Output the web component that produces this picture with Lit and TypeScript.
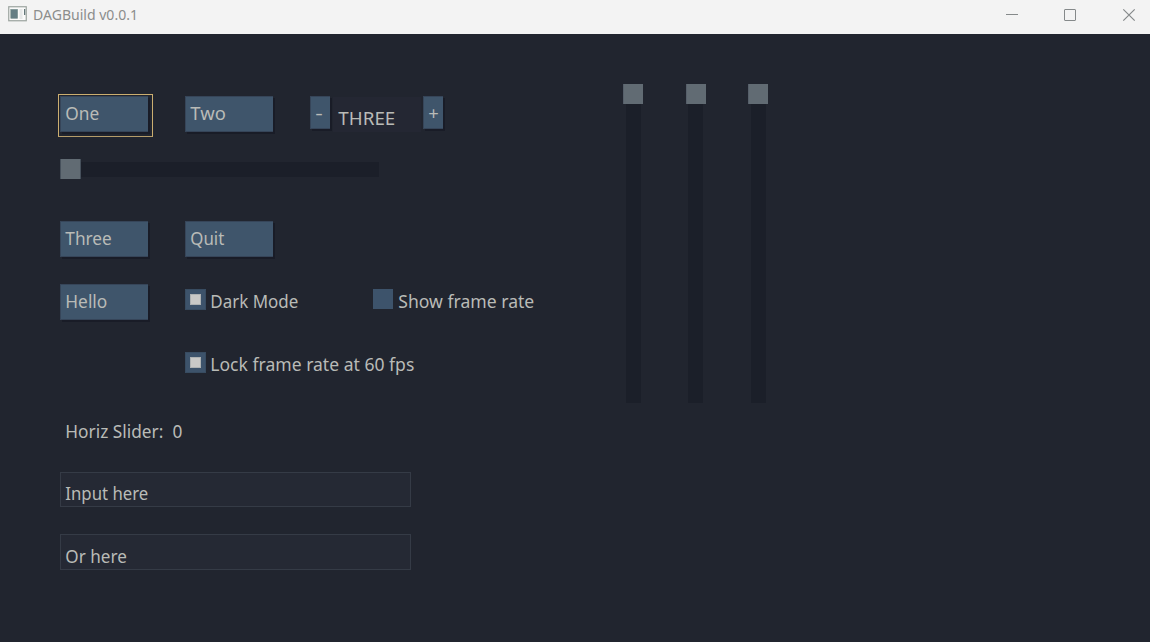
import { LitElement, html, css, svg } from "lit";
import { customElement, property } from "lit/decorators.js";
import { classMap } from "lit/directives/class-map.js";

/** Text set to a given advance width, the way the toolkit's font atlas lays it out. */
@customElement("ui-text")
class UiText extends LitElement {
  @property() value = "";
  @property({ type: Number }) width = 0;
  static styles = css`
    :host { display: block; height: 24px; }
    svg { display: block; overflow: visible; }
    text { font: 18.5px "Noto Sans", sans-serif; fill: #b9bbb7; white-space: pre; }
  `;
  render() {
    return html`<svg width=${this.width} height="24">
      ${svg`<text x="0.3" y="19.4" textLength=${this.width} lengthAdjust="spacingAndGlyphs">${this.value}</text>`}
    </svg>`;
  }
}

@customElement("ui-button")
class UiButton extends LitElement {
  @property() label = "";
  @property({ type: Number }) textWidth = 0;
  @property({ type: Boolean }) focused = false;
  static styles = css`
    :host { display: block; }
    .button {
      box-sizing: border-box; width: 88px; height: 36px; padding: 4px 0 0 4px;
      background: #3f556b; border: 1px solid #364559; border-right: 0;
      box-shadow: 2px 2px 0 #191c27;
    }
    .ring { width: 91px; height: 39px; padding: 1px; margin: -2px; border: 1px solid #cbae70; border-bottom-color: #b59c69; }
  `;
  render() {
    const face = html`<div class="button"><ui-text .value=${this.label} .width=${this.textWidth}></ui-text></div>`;
    return this.focused ? html`<div class="ring">${face}</div>` : face;
  }
}

@customElement("ui-check")
class UiCheck extends LitElement {
  @property() label = "";
  @property({ type: Number }) textWidth = 0;
  @property({ type: Boolean }) checked = false;
  static styles = css`
    :host { display: flex; gap: 5px; padding-top: 5px; }
    .box { box-sizing: border-box; width: 20px; height: 20px; padding: 5px; background: #3d536b; }
    .on { width: 21px; height: 21px; border: 1px solid #384c61; padding: 4px; margin-right: -1px; }
    .mark { width: 11px; height: 11px; background: #c9c9c7; box-shadow: inset 0 0 0 1px #aeb2b3; }
  `;
  render() {
    return html`<div class=${classMap({ box: true, on: this.checked })}>
        ${this.checked ? html`<div class="mark"></div>` : null}
      </div>
      <ui-text .value=${this.label} .width=${this.textWidth}></ui-text>`;
  }
}

@customElement("app-root")
class AppRoot extends LitElement {
  static styles = css`
    :host { display: flex; flex-direction: column; width: 1150px; height: 642px; background: #21252f; overflow: hidden; }
    .title { display: flex; align-items: center; height: 34px; background: #f3f3f3; flex: none; }
    .appicon { margin: -6px 6px 0 8px; }
    .name svg { display: block; overflow: visible; }
    .name text { font: 15px "Noto Sans", sans-serif; fill: #8b8d8c; }
    .controls { margin-left: auto; display: block; }
    .stage { display: flex; flex: 1; }
    .left { display: grid; box-sizing: border-box; flex: none; width: 623px; padding: 62px 0 0 60px;
      grid-template-columns: 125px 125px 63px 1fr; grid-template-rows: 63px 62px 63px 63px 62px 63px 62px 62px; align-content: start; }
    .stepper { display: flex; grid-column: 3 / 5; }
    .step { box-sizing: border-box; width: 20px; height: 33px; border: 1px solid #364559; border-right: 0; background: #3f556b; box-shadow: 2px 2px 0 #191c27; padding: 4px 0 0 4px; }
    .value { box-sizing: border-box; width: 88px; height: 35px; padding: 9px 0 0 5px; margin: 1px 2px 0 3px; background: #242733; }
    .hslider { grid-column: 1 / 5; display: flex; align-items: flex-start; }
    .thumb { width: 20px; height: 20px; background: #616b73; box-shadow: inset 1px 0 #565f6a; }
    .hslider .thumb { width: 21px; box-shadow: inset 1px 0 #46505b, inset -1px 0 #46505b; }
    .htrack { width: 298px; height: 15px; margin-top: 3px; background: #1b1f29; }
    .show { grid-column: 4; }
    .wide { grid-column: 2 / 5; }
    .horiz { grid-column: 1 / 5; padding: 10px 0 0 5px; }
    .input { grid-column: 1 / 5; box-sizing: border-box; width: 351px; height: 35px; padding: 8px 0 0 4px; background: #252934; border: 1px solid #353b46; }
    .input.last { height: 36px; padding-top: 9px; }
    .sliders { display: flex; gap: 42.5px; padding-top: 50px; }
    .vslider { display: flex; flex-direction: column; align-items: center; }
    .vtrack { width: 15px; height: 299px; background: #1b1f29; }
  `;

  render() {
    return html`
      <div class="title">
        <svg class="appicon" width="19" height="16" viewBox="0 0 19 16">
          <rect x=".75" y=".75" width="17.5" height="14" fill="#fafafa" stroke="#9ba39e" stroke-width="1.2" />
          <rect x="2" y="3" width="8" height="9.5" fill="#a9b8b4" />
          <rect x="3" y="3.5" width="6.5" height="9" fill="#657e84" />
          <rect x="11.5" y="3" width="3" height="10" fill="#e6e8e8" />
          <rect x="16" y="3" width="1.3" height="6" fill="#65787a" />
        </svg>
        <div class="name"><svg width="105" height="24"><text x="0" y="15.3" textLength="105" lengthAdjust="spacingAndGlyphs">DAGBuild v0.0.1</text></svg></div>
        <svg class="controls" width="144" height="34" viewBox="0 0 144 34" fill="none" stroke="#85898a">
          <path d="M0 14.5h12" />
          <rect x="58.5" y="9.5" width="11" height="11" rx=".5" />
          <path d="M117.3 9.3l11.4 11.4M128.7 9.3l-11.4 11.4" stroke-width="1.2" />
        </svg>
      </div>
      <div class="stage">
        <div class="left">
          <ui-button label="One" .textWidth=${34} focused></ui-button>
          <ui-button label="Two" .textWidth=${35.5}></ui-button>
          <div class="stepper">
            <div class="step"><ui-text value="-" .width=${7.5}></ui-text></div>
            <div class="value"><ui-text value="THREE" .width=${57}></ui-text></div>
            <div class="step"><ui-text value="+" .width=${10.5}></ui-text></div>
          </div>
          <div class="hslider"><div class="thumb"></div><div class="htrack"></div></div>
          <ui-button label="Three" .textWidth=${46.5}></ui-button>
          <ui-button class="wide" label="Quit" .textWidth=${34}></ui-button>
          <ui-button label="Hello" .textWidth=${42}></ui-button>
          <ui-check label="Dark Mode" .textWidth=${88} checked></ui-check>
          <ui-check class="show" label="Show frame rate" .textWidth=${136}></ui-check>
          <ui-check class="wide" label="Lock frame rate at 60 fps" .textWidth=${204} checked></ui-check>
          <div class="horiz"><ui-text .value=${"Horiz Slider:\u00a0 0"} .width=${117}></ui-text></div>
          <div class="input"><ui-text value="Input here" .width=${83}></ui-text></div>
          <div class="input last"><ui-text value="Or here" .width=${61.5}></ui-text></div>
        </div>
        <div class="sliders">
          ${[0, 1, 2].map(() => html`<div class="vslider"><div class="thumb"></div><div class="vtrack"></div></div>`)}
        </div>
      </div>`;
  }
}
